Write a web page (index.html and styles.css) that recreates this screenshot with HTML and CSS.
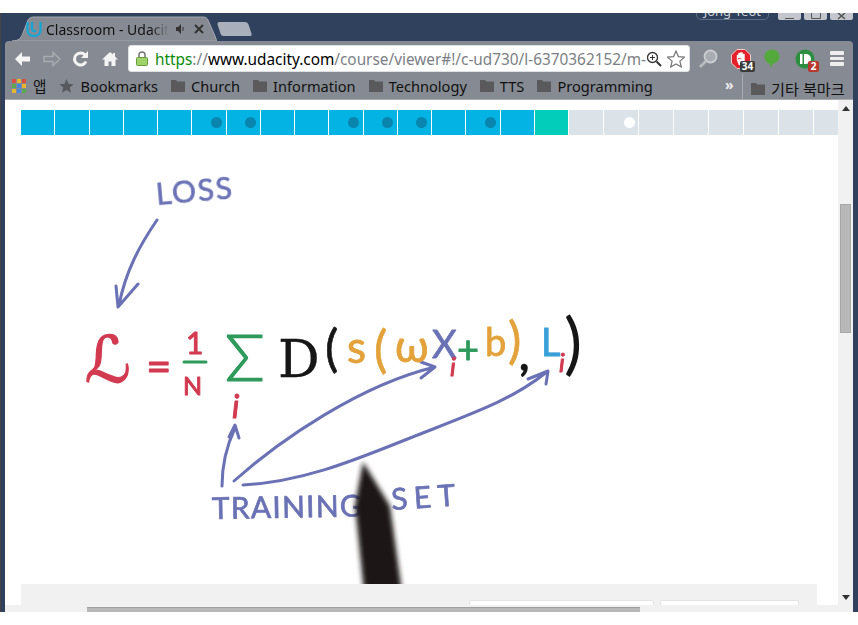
FILE: index.html
```html
<!DOCTYPE html>
<html lang="en">
<head>
    <meta charset="UTF-8">
    <title>Classroom - Udacity</title>
    <link rel="stylesheet" href="styles.css">
</head>
<body>
<div class="window">

    <!-- Tabs -->
    <div class="titlebar">
        <div class="tab">
            <svg class="tab-shape" width="205" height="28" viewBox="0 0 205 28"><path d="M0 28C7 28 9 25 11 20L16 7C17 5 19 4 22 4H191C194 4 195 5 196 7L203 23C204 26 205 28 205 28Z" fill="#868b93" stroke="#a2a7ae"/></svg>
            <svg class="tab-logo" width="16" height="16" viewBox="0 0 16 16"><path d="M1.500 1V9C1.500 13 4.500 15 8 15S14.500 13 14.500 9V1M6 1V8C6 10 8 11 10 9.500" fill="none" stroke="#12a7d8" stroke-width="2.200"/></svg>
            <span class="tab-title">Classroom - Udacity</span>
            <svg class="tab-sound" width="10" height="10" viewBox="0 0 10 10"><path d="M0 3H2L5 0V10L2 7H0Z" fill="#333"/><path d="M7 3V7" stroke="#333"/></svg>
            <svg class="tab-close" width="10" height="10" viewBox="0 0 10 10"><path d="M1 1L9 9M9 1L1 9" stroke="#333" stroke-width="2"/></svg>
        </div>
        <div class="new-tab"></div>
        <div class="user-name">Jong-Teot</div>
        <div class="win-btns">
            <span class="win-btn"><svg width="23" height="11" viewBox="0 0 23 11"><path d="M7 9.500H16" stroke="#555"/></svg></span>
            <span class="win-btn"><svg width="23" height="11" viewBox="0 0 23 11"><path d="M7.500 3V9.500H16.500V3" fill="none" stroke="#555"/></svg></span>
            <span class="win-btn"><svg width="23" height="11" viewBox="0 0 23 11"><path d="M8 4L15 10M15 4L8 10" stroke="#555" stroke-width="1.500"/></svg></span>
        </div>
    </div>

    <!-- Toolbar -->
    <div class="toolbar">
        <svg class="tool" width="18" height="16" viewBox="0 0 18 16"><path d="M8 1L1 8L8 15V10.500H16V5.500H8Z" fill="#f4f4f4"/></svg>
        <svg class="tool tool-off" width="18" height="16" viewBox="0 0 18 16"><path d="M10 1.500L17 8L10 14.500V10.500H1V5.500H10Z" fill="none" stroke="#a7abb1" stroke-width="1.500"/></svg>
        <svg class="tool" width="18" height="16" viewBox="0 0 18 16"><path d="M14 10.500A6 6 0 1 1 13 4" fill="none" stroke="#f4f4f4" stroke-width="3"/><path d="M16 0V7H9Z" fill="#f4f4f4"/></svg>
        <svg class="tool" width="18" height="16" viewBox="0 0 18 16"><path d="M9 1L1 8.500H3.500V15H7.500V10.500H10.500V15H14.500V8.500H17L14 5.500V2H12V3.500Z" fill="#f4f4f4"/></svg>

        <div class="omnibox">
            <svg class="lock" width="12" height="15" viewBox="0 0 12 15"><path d="M3 7V4A3 3 0 0 1 9 4V7" fill="none" stroke="#777" stroke-width="1.500"/><rect x="0.500" y="6.500" width="11" height="8" rx="1" fill="#9ed36a" stroke="#6b9b3f"/></svg>
            <div class="url"><span class="url-https">https</span><span class="url-dim">://</span><span class="url-host">www.udacity.com</span><span class="url-dim">/course/viewer#!/c-ud730/l-6370362152/m-</span></div>
            <svg class="zoom-icon" width="16" height="16" viewBox="0 0 16 16"><circle cx="6.500" cy="6.500" r="5" fill="#fff" stroke="#333" stroke-width="1.300"/><path d="M10.500 10.500L15 15" stroke="#333" stroke-width="2"/><path d="M4 6.500H9M6.500 4V9" stroke="#333"/></svg>
            <svg class="star-icon" width="18" height="18" viewBox="0 0 18 18"><path d="M9 1L11.400 6.600L17.500 7.100L12.900 11.100L14.300 17L9 13.900L3.700 17L5.100 11.100L0.500 7.100L6.600 6.600Z" fill="#fff" stroke="#777" stroke-width="1.200"/></svg>
        </div>

        <svg class="ext ext-search" width="20" height="20" viewBox="0 0 20 20"><circle cx="12.500" cy="7.500" r="6" fill="#a8adb3" stroke="#c9ccd0" stroke-width="1.800"/><path d="M8 12L2 18" stroke="#b9bcc0" stroke-width="2.600"/></svg>
        <div class="ext ext-stop">
            <svg width="20" height="20" viewBox="0 0 20 20"><path d="M6 0.500H14L19.500 6V14L14 19.500H6L0.500 14V6Z" fill="#e4212b" stroke="#f3c9c9"/><path d="M6 11V6H7.500V9M7.500 9V4H9.500V9M9.500 9V3.500H11.500V9M11.500 9V5H13.500V12L12 16H8L6 11Z" fill="#fff" stroke="#fff" stroke-width="0.400"/></svg>
            <span class="badge badge-dark">34</span>
        </div>
        <svg class="ext ext-bubble" width="16" height="20" viewBox="0 0 16 20"><path d="M8 0.500C12 0.500 15.500 3.500 15.500 7.500C15.500 11.500 12 14 8.500 15L7.500 19L6 15C3 14 0.500 11 0.500 7.500C0.500 3.500 4 0.500 8 0.500Z" fill="#54a93d"/></svg>
        <div class="ext ext-push">
            <svg width="20" height="20" viewBox="0 0 20 20"><circle cx="10" cy="10" r="9.500" fill="#2c8f3f"/><rect x="5" y="5" width="2.500" height="10" fill="#fff"/><path d="M9 5H11A5 5 0 0 1 11 15H9Z" fill="#fff"/></svg>
            <span class="badge badge-red">2</span>
        </div>
        <div class="menu-icon"><span></span><span></span><span></span></div>
    </div>

    <!-- Bookmarks -->
    <div class="bookmarks">
        <svg class="apps" width="14" height="14" viewBox="0 0 14 14">
            <rect width="4" height="4" fill="#d8503f"/><rect x="5" width="4" height="4" fill="#e8b62f"/><rect x="10" width="4" height="4" fill="#d8503f"/>
            <rect y="5" width="4" height="4" fill="#5aa84f"/><rect x="5" y="5" width="4" height="4" fill="#4a86e0"/><rect x="10" y="5" width="4" height="4" fill="#e8b62f"/>
            <rect y="10" width="4" height="4" fill="#e8b62f"/><rect x="5" y="10" width="4" height="4" fill="#4a86e0"/><rect x="10" y="10" width="4" height="4" fill="#5aa84f"/>
        </svg>
        <span class="bm-text bm-apps">앱</span>
        <svg class="bm-star" width="15" height="14" viewBox="0 0 15 14"><path d="M7.500 0L9.500 4.800L14.700 5.200L10.700 8.500L12 13.700L7.500 11L3 13.700L4.300 8.500L0.300 5.200L5.500 4.800Z" fill="#56595e"/></svg>
        <span class="bm-text bm-first">Bookmarks</span>
        <span class="bm"><svg class="folder" width="14" height="13" viewBox="0 0 14 13"><path d="M0 1H5L6.500 2.500H14V13H0Z" fill="#5a5a5c"/></svg><span class="bm-text">Church</span></span>
        <span class="bm"><svg class="folder" width="14" height="13" viewBox="0 0 14 13"><path d="M0 1H5L6.500 2.500H14V13H0Z" fill="#5a5a5c"/></svg><span class="bm-text">Information</span></span>
        <span class="bm"><svg class="folder" width="14" height="13" viewBox="0 0 14 13"><path d="M0 1H5L6.500 2.500H14V13H0Z" fill="#5a5a5c"/></svg><span class="bm-text">Technology</span></span>
        <span class="bm"><svg class="folder" width="14" height="13" viewBox="0 0 14 13"><path d="M0 1H5L6.500 2.500H14V13H0Z" fill="#5a5a5c"/></svg><span class="bm-text">TTS</span></span>
        <span class="bm"><svg class="folder" width="14" height="13" viewBox="0 0 14 13"><path d="M0 1H5L6.500 2.500H14V13H0Z" fill="#5a5a5c"/></svg><span class="bm-text">Programming</span></span>
        <span class="bm-more">»</span>
        <span class="bm-sep"></span>
        <span class="bm bm-other"><svg class="folder" width="14" height="13" viewBox="0 0 14 13"><path d="M0 1H5L6.500 2.500H14V13H0Z" fill="#5a5a5c"/></svg><span class="bm-text">기타 북마크</span></span>
    </div>

    <!-- Page -->
    <div class="viewport">
        <div class="page">
            <div class="progress">
                <div class="seg"></div><div class="seg"></div><div class="seg"></div><div class="seg"></div><div class="seg"></div>
                <div class="seg"><i class="dot"></i></div><div class="seg"><i class="dot"></i></div>
                <div class="seg"></div><div class="seg"></div>
                <div class="seg"><i class="dot"></i></div><div class="seg"><i class="dot"></i></div><div class="seg"><i class="dot"></i></div>
                <div class="seg"></div>
                <div class="seg"><i class="dot"></i></div>
                <div class="seg"></div>
                <div class="seg seg-current"></div>
                <div class="seg seg-todo"></div>
                <div class="seg seg-todo"><i class="dot dot-white"></i></div>
                <div class="seg seg-todo"></div><div class="seg seg-todo"></div><div class="seg seg-todo"></div><div class="seg seg-todo"></div><div class="seg seg-todo"></div>
                <div class="seg seg-todo"></div>
            </div>

            <!-- Video frame, coordinates are the same as the screenshot -->
            <svg class="video" width="817" height="449" viewBox="21 135 817 449">
                <defs>
                    <filter id="soft"><feGaussianBlur stdDeviation="0.600"/></filter>
                    <filter id="softer" x="-30%" y="-10%" width="160%" height="120%"><feGaussianBlur stdDeviation="2.400"/></filter>
                </defs>
                <g filter="url(#soft)">
                    <g class="ink-arrows">
                        <path d="M157 220C140 245 126 270 119 305M116 286L118 307L138 284"/>
                        <path d="M222 486C222 465 227 445 235 428M229 437L235 425L239 438"/>
                        <path d="M234 481C280 440 360 385 435 367M421 362L435 367L421 378"/>
                        <path d="M243 485C300 482 350 462 400 442C470 414 510 402 548 371M528 379L548 371L546 384"/>
                    </g>
                    <text class="ink ink-blue h-loss" transform="rotate(-5 157 205)" x="157" y="205" textLength="76">LOSS</text>
                    <text class="ink ink-blue h-train" transform="rotate(-1 212 520)" x="212" y="519" textLength="150">TRAINING</text>
                    <text class="ink ink-blue h-train" transform="rotate(-4 392 510)" x="392" y="510" textLength="64">SET</text>

                    <text class="ink ink-red h-script" x="85" y="382">ℒ</text>
                    <text class="ink ink-red h-eq" x="146" y="382">=</text>
                    <text class="ink ink-red h-one" x="186" y="354">1</text>
                    <path class="bar-green" d="M184 362H206"/>
                    <text class="ink ink-red h-small" x="183" y="395">N</text>
                    <text class="ink ink-green h-sum" x="225" y="381">Σ</text>
                    <text class="ink ink-red h-i" x="232" y="418">i</text>
                    <text class="ink ink-black h-d" x="278" y="377">D</text>
                    <text class="ink ink-black h-paren" x="325" y="366">(</text>
                    <text class="ink ink-orange h-big" x="347" y="363">s</text>
                    <text class="ink ink-orange h-paren" x="374" y="367">(</text>
                    <text class="ink ink-orange h-big" x="395" y="362">ω</text>
                    <text class="ink ink-blue h-mid" x="432" y="358">X</text>
                    <text class="ink ink-red h-sub" x="450" y="376">i</text>
                    <text class="ink ink-green h-plus" x="457" y="363">+</text>
                    <text class="ink ink-orange h-mid" x="485" y="356">b</text>
                    <text class="ink ink-orange h-paren" x="508" y="358">)</text>
                    <text class="ink ink-black h-comma" x="519" y="370">,</text>
                    <text class="ink ink-sky h-mid" x="541" y="356">L</text>
                    <text class="ink ink-red h-sub" x="559" y="372">i</text>
                    <text class="ink ink-black h-bigparen" x="564" y="367">)</text>
                </g>
                <path class="pen" filter="url(#softer)" d="M363 462L373 478L390 506L402 592H364L355 505Z"/>
            </svg>

            <div class="footer-strip">
                <div class="footer-card footer-card-wide"></div>
                <div class="footer-card footer-card-small"></div>
            </div>
        </div>
        <div class="vscroll">
            <span class="arrow-up"></span>
            <div class="vthumb"></div>
            <span class="arrow-down"></span>
        </div>
    </div>
    <div class="hscroll"><div class="hthumb"></div></div>
</div>
</body>
</html>
```

FILE: styles.css
```css
* { box-sizing: border-box; margin: 0; padding: 0; }
html, body { height: 100%; background-color: #fff; overflow: hidden; }
body { padding-top: 13px; font-family: 'Noto Sans', 'Noto Sans CJK KR', sans-serif; }

.window { height: 599px; background-color: #2f415c; padding: 0 5px 0 4px; overflow: hidden; display: flex; flex-direction: column; border-left: 1px solid #444; }

/* tabs */
.titlebar { height: 28px; flex: none; display: flex; align-items: flex-end; position: relative; padding-left: 7px; }
.tab { position: relative; width: 205px; height: 28px; display: flex; align-items: center; padding: 4px 0 0 14px; }
.tab-shape { position: absolute; left: 0; top: 0; }
.tab-logo { position: relative; margin-right: 4px; }
.tab-title { position: relative; width: 123px; overflow: hidden; white-space: nowrap; font-size: 14px; color: #111; -webkit-mask-image: linear-gradient(to right, #000 85%, transparent); mask-image: linear-gradient(to right, #000 85%, transparent); }
.tab-sound { position: relative; margin-left: 7px; }
.tab-close { position: relative; margin-left: 8px; }
.new-tab { width: 31px; height: 14px; margin: 0 0 5px 2px; background-color: #a9b0bb; border-radius: 3px 3px 2px 2px; transform: skewX(18deg); }
.user-name { position: absolute; right: 84px; top: -9px; height: 16px; padding: 0 7px; border: 1px solid #5d6d85; border-radius: 5px; color: #ccd0d6; font-size: 13px; line-height: 13px; overflow: hidden; }
.win-btns { position: absolute; right: 0; top: -4px; display: flex; gap: 3px; }
.win-btn { display: block; width: 23px; height: 11px; background-color: #c3c7cd; border-radius: 0 0 2px 2px; }
.win-btn svg { display: block; }

/* toolbar */
.toolbar { height: 33px; flex: none; display: flex; align-items: center; padding: 2px 0 0 9px; background-color: #868b93; border-radius: 4px 4px 0 0; }
.tool { flex: none; margin-right: 11px; }
.omnibox { width: 562px; height: 27px; margin-left: -2px; display: flex; align-items: center; padding: 0 4px 0 7px; background-color: #fff; border: 1px solid #dfe1e4; border-radius: 3px; }
.lock { flex: none; margin-right: 7px; }
.url { flex: 1; font-size: 15.350px; white-space: nowrap; overflow: hidden; color: #000; }
.url-https { color: #0a8a0a; }
.url-dim { color: #7b7f85; }
.url-host { color: #000; }
.zoom-icon { flex: none; margin-right: 5px; }
.star-icon { flex: none; }
.ext { flex: none; position: relative; }
.ext-search { margin-left: 8px; }
.ext-stop { margin-left: 13px; width: 20px; height: 20px; }
.ext-bubble { margin-left: 13px; }
.ext-push { margin-left: 15px; width: 20px; height: 20px; }
.badge { position: absolute; font-size: 10px; font-weight: 700; color: #fff; text-align: center; line-height: 11px; height: 11px; border-radius: 2px; }
.badge-dark { left: 9px; top: 12px; width: 15px; background-color: #3b3b3b; }
.badge-red { left: 13px; top: 12px; width: 11px; background-color: #b7382c; }
.menu-icon { margin-left: 15px; width: 14px; display: flex; flex-direction: column; gap: 2px; }
.menu-icon span { height: 3.500px; background-color: #eee; border-radius: 1px; }

/* bookmarks */
.bookmarks { height: 26px; flex: none; display: flex; align-items: center; padding: 0 0 2px 7px; background-color: #868b93; border-bottom: 1px solid #a7abb0; white-space: nowrap; position: relative; }
.apps { flex: none; }
.bm-text { font-size: 14.600px; color: #111; }
.bm-apps { margin-left: 7px; margin-right: 13px; }
.bm-star { flex: none; margin-right: 6px; }
.bm-first { margin-right: 13px; }
.bm { display: inline-flex; align-items: center; gap: 6px; margin-right: 13px; }
.folder { flex: none; }
.bm-more { position: absolute; left: 720px; top: 1px; color: #eee; font-size: 14px; font-weight: 700; }
.bm-sep { position: absolute; left: 737px; top: 0; height: 26px; width: 1px; background-color: #a9adb3; }
.bm-other { position: absolute; left: 746px; top: 3px; margin: 0; }
.bm-other .bm-text { font-size: 15.200px; }

/* page */
.viewport { flex: 1; min-height: 0; display: flex; background-color: #fff; }
.page { flex: 1; min-width: 0; display: flex; flex-direction: column; padding: 10px 0 0 16px; overflow: hidden; }
.progress { height: 25px; flex: none; display: flex; width: 817px; overflow: hidden; }
.seg { flex: none; width: 34.250px; background-color: #02b3e4; border-right: 1px solid #fff; display: flex; align-items: center; justify-content: flex-end; padding-right: 4px; }
.seg-current { background-color: #02ccba; }
.seg-todo { width: 35px; background-color: #dbe2e8; padding-right: 3px; }
.dot { display: block; width: 11px; height: 11px; border-radius: 50%; background-color: #0a85ad; }
.dot-white { background-color: #fff; }
.video { display: block; flex: none; }
.footer-strip { flex: 1; width: 796px; display: flex; align-items: flex-start; padding: 16px 0 0 448px; gap: 6px; background-color: #f1f1f1; overflow: hidden; }
.footer-card { height: 20px; background-color: #fff; border: 1px solid #e4e4e4; border-radius: 2px; }
.footer-card-wide { width: 185px; }
.footer-card-small { width: 139px; }

/* handwriting in the video */
.ink { font-family: 'Lato', sans-serif; font-style: normal; stroke-linejoin: round; stroke-linecap: round; }
.ink-blue { fill: #6a72b5; stroke: #6a72b5; }
.ink-red { fill: #d23a50; stroke: #d23a50; }
.ink-green { fill: #2e9a5b; stroke: #2e9a5b; }
.ink-black { fill: #151515; stroke: #151515; }
.ink-orange { fill: #e3a23a; stroke: #e3a23a; }
.ink-sky { fill: #3aa0d8; stroke: #3aa0d8; }
.h-loss { font-size: 30px; stroke-width: 0.600; }
.h-train { font-size: 30px; stroke-width: 0.700; }
.h-script { font-family: 'DejaVu Sans', sans-serif; font-size: 64px; stroke-width: 1.200; }
.h-eq { font-size: 44px; stroke-width: 0.800; }
.h-one { font-size: 30px; stroke-width: 1; }
.h-small { font-size: 25px; stroke-width: 1; }
.h-sum { font-size: 66px; font-weight: 300; stroke-width: 1.200; }
.h-i { font-size: 32px; font-style: italic; stroke-width: 1; }
.h-d { font-family: 'DejaVu Serif', serif; font-size: 52px; stroke-width: 0.300; }
.h-paren { font-size: 50px; stroke-width: 0.600; }
.h-big { font-size: 44px; stroke-width: 0.800; }
.h-mid { font-size: 38px; stroke-width: 0.800; }
.h-sub { font-size: 25px; font-style: italic; stroke-width: 1; }
.h-plus { font-size: 38px; stroke-width: 0.800; }
.h-comma { font-size: 46px; stroke-width: 1.400; }
.h-bigparen { font-size: 68px; stroke-width: 0; }
.ink-arrows path { fill: none; stroke: #6a72b5; stroke-width: 3; stroke-linecap: round; stroke-linejoin: round; }
.bar-green { stroke: #2e9a5b; stroke-width: 3; stroke-linecap: round; }
.pen { fill: #1b1714; }

/* scrollbars */
.vscroll { width: 15px; flex: none; display: flex; flex-direction: column; align-items: center; background-color: #f1f1f1; }
.arrow-up { width: 0; height: 0; margin-top: 6px; border: 4px solid transparent; border-top: 0; border-bottom: 5px solid #333; }
.vthumb { width: 11px; height: 129px; margin-top: 93px; background-color: #b8b8b8; border: 1px solid #a8a8a8; }
.arrow-down { width: 0; height: 0; margin-top: auto; margin-bottom: 5px; border: 4px solid transparent; border-bottom: 0; border-top: 5px solid #333; }
.hscroll { height: 7px; flex: none; background-color: #f1f1f1; padding: 2px 0 0 82px; position: relative; }
.hthumb { width: 553px; height: 7px; background-color: #b8b8b8; border-top: 1px solid #a0a0a0; }
```
